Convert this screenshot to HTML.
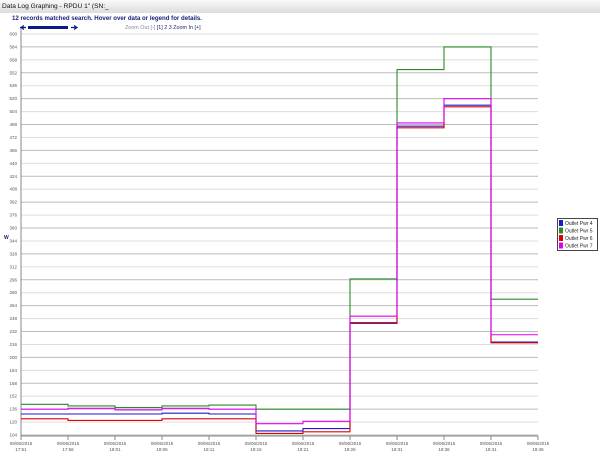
<!DOCTYPE html>
<html><head><style>
body{margin:0;width:600px;height:460px;background:#fff;font-family:"Liberation Sans",sans-serif;overflow:hidden;position:relative}
#hdr{position:absolute;left:0;top:0;width:600px;height:13px;background:linear-gradient(#fafafa,#dcdcdc);font-size:6.6px;line-height:13px;padding-left:2px;color:#111}
#msg{position:absolute;left:12px;top:15px;font-size:6.1px;font-weight:bold;color:#1a237e}
#zm{position:absolute;left:125px;top:24.5px;font-size:5.4px;color:#889}
</style></head><body>
<div id="hdr">Data Log Graphing - RPDU 1" (SN:_</div>
<div id="msg">12 records matched search. Hover over data or legend for details.</div>
<div id="zm">Zoom Out [-] <span style="color:#226">[1] 2 3 Zoom In [+]</span></div>
<svg id="s" width="600" height="460" style="position:absolute;left:0;top:0"></svg>
<script>
var s=document.getElementById('s'),h='';
function Y(v){return 34+(600-v)*0.8085}
function X(i){return 21+i*47}
h+='<rect x="28" y="26" width="40" height="3" fill="#0a1a8a"/><path d="M20 27.5h6M24 25.5l-3 2 3 2" stroke="#0a1a8a" stroke-width="1.2" fill="none"/><path d="M71 27.5h6M74 25.5l3 2-3 2" stroke="#0a1a8a" stroke-width="1.2" fill="none"/>';
for(var v=104;v<=600;v+=16){var y=Y(v);h+='<line x1="21" x2="538" y1="'+y+'" y2="'+y+'" stroke="'+(v%32==8?'#bbb':'#ddd')+'" stroke-width="1"/>';
h+='<text x="17" y="'+(y+1.5)+'" font-size="4.5" fill="#555" text-anchor="end" font-family="Liberation Sans">'+v+'</text>';}
h+='<line x1="21" x2="21" y1="28" y2="436" stroke="#888"/><line x1="21" x2="538" y1="436" y2="436" stroke="#888"/>';
h+='<text x="4" y="239" font-size="5" font-weight="bold" fill="#226" font-family="Liberation Sans">W</text>';
var t=['17:51','17:56','18:01','18:06','18:11','18:16','18:21','18:26','18:31','18:36','18:41','18:46'];
for(var i=0;i<12;i++){var x=X(i);h+='<line x1="'+x+'" x2="'+x+'" y1="436" y2="440" stroke="#888"/><text x="'+x+'" y="445" font-size="4.5" fill="#555" text-anchor="middle" font-family="Liberation Sans">09/06/2015</text><text x="'+x+'" y="451" font-size="4.5" fill="#555" text-anchor="middle" font-family="Liberation Sans">'+t[i]+'</text>';}
var D=[
['#2a8a2a',[142,140,138,140,141,136,136,297,556,584,272]],
['#1a1ad0',[130,130,130,131,130,109,112,243,486,512,219]],
['#d00',[124,122,122,124,124,106,108,242,484,510,218]],
['#e000f0',[136,137,135,137,136,118,121,251,490,520,228]]];
D.forEach(function(d){var p='';d[1].forEach(function(v,i){var y=Y(v);p+=(i?'L':'M')+X(i)+' '+y+'H'+X(i+1);});h+='<path d="'+p+'" fill="none" stroke="'+d[0]+'" stroke-width="1.1"/>';});
h+='<rect x="557.5" y="218.5" width="40" height="32" fill="#fff" stroke="#444"/>';
var L=[['#1a1ad0','Outlet Pwr 4'],['#2a8a2a','Outlet Pwr 5'],['#d00','Outlet Pwr 6'],['#e000f0','Outlet Pwr 7']];
L.forEach(function(l,i){var y=220+i*7.5;h+='<rect x="559" y="'+y+'" width="4" height="6" fill="'+l[0]+'"/><text x="565" y="'+(y+5)+'" font-size="5" fill="#222" font-family="Liberation Sans">'+l[1]+'</text>';});
s.innerHTML=h;
</script>
</body></html>
